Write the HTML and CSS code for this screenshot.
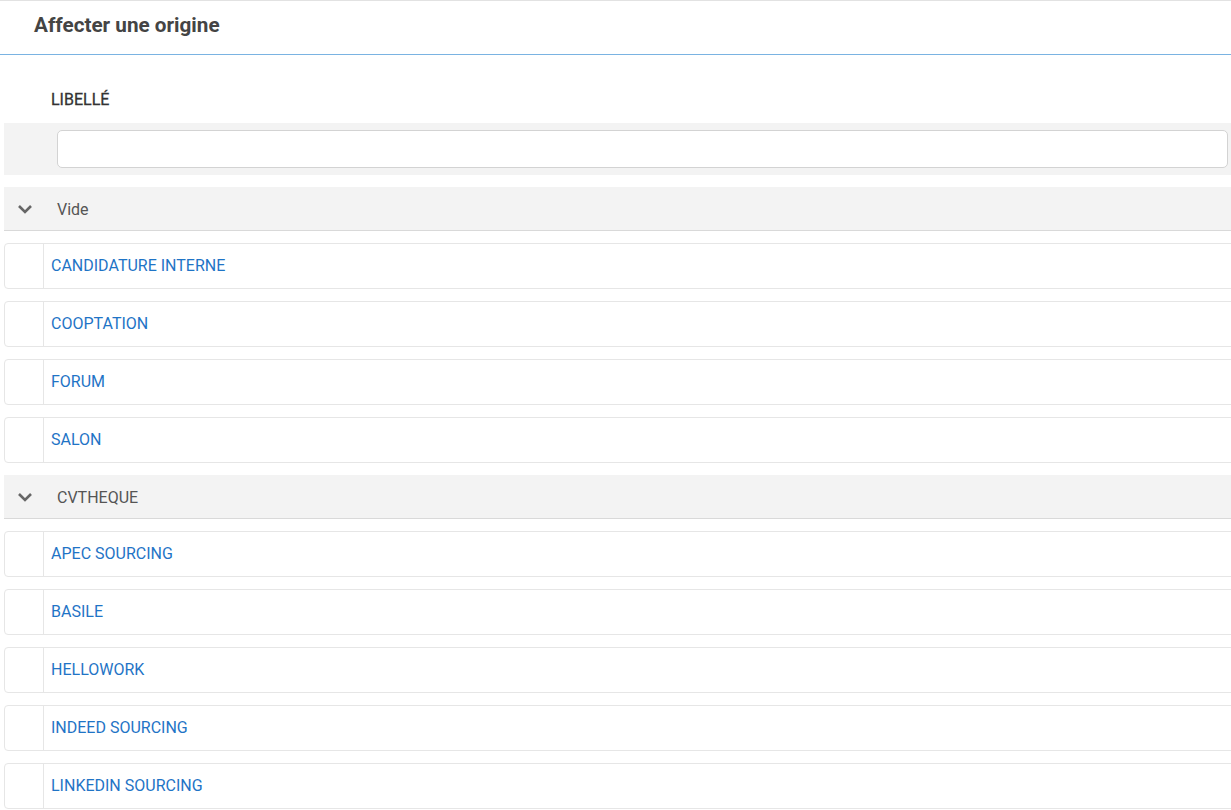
FILE: index.html
```html
<!DOCTYPE html>
<html lang="fr">
<head>
  <meta charset="UTF-8">
  <meta name="viewport" content="width=device-width, initial-scale=1.0">
  <title>Affecter une origine</title>
  <link rel="stylesheet" href="styles.css">
</head>
<body>
  <div class="modal">
    <!-- en-tête -->
    <div class="header">
      <h1>Affecter une origine</h1>
    </div>
    <div class="content">
      <div class="col-title">LIBELLÉ</div>
      <!-- filtre -->
      <div class="filter">
        <input type="text">
      </div>
      <!-- groupe Vide -->
      <div class="group">
        <svg class="chevron" width="16" height="10" viewBox="0 0 16 10"><path d="M2 2 L8 8 L14 2" fill="none" stroke="#666" stroke-width="2.6"/></svg>
        <span>Vide</span>
      </div>
      <ul class="rows">
        <li><span class="check"></span><a>CANDIDATURE INTERNE</a></li>
        <li><span class="check"></span><a>COOPTATION</a></li>
        <li><span class="check"></span><a>FORUM</a></li>
        <li><span class="check"></span><a>SALON</a></li>
      </ul>
      <!-- groupe CVTHEQUE -->
      <div class="group">
        <svg class="chevron" width="16" height="10" viewBox="0 0 16 10"><path d="M2 2 L8 8 L14 2" fill="none" stroke="#666" stroke-width="2.6"/></svg>
        <span>CVTHEQUE</span>
      </div>
      <ul class="rows">
        <li><span class="check"></span><a>APEC SOURCING</a></li>
        <li><span class="check"></span><a>BASILE</a></li>
        <li><span class="check"></span><a>HELLOWORK</a></li>
        <li><span class="check"></span><a>INDEED SOURCING</a></li>
        <li><span class="check"></span><a>LINKEDIN SOURCING</a></li>
      </ul>
    </div>
  </div>
</body>
</html>
```

FILE: styles.css
```css
/* reset */
* {
  margin: 0;
  padding: 0;
  box-sizing: border-box;
}
html, body {
  overflow: hidden;
}
body {
  font-family: Roboto, "Liberation Sans", sans-serif;
  color: #444;
  background: #fff;
  width: 1231px;
  height: 810px;
}
li {
  list-style-type: none;
}
/* en-tête */
.modal {
  border-top: 1px solid #e2e2e2;
}
.header {
  height: 54px;
  border-bottom: 1px solid #7ab3e2;
  padding: 12px 0 0 34px;
}
.header h1 {
  font-size: 20.7px;
  font-weight: 700;
  color: #444;
  line-height: 24px;
}
/* contenu */
.content {
  padding-left: 4px;
  width: 1240px;
}
.col-title {
  padding: 36px 0 0 47px;
  height: 68px;
  font-size: 16px;
  font-weight: 400;
  color: #333;
  line-height: 18px;
  -webkit-text-stroke: 0.3px #333;
}
.filter {
  background: #f3f3f3;
  height: 52px;
  padding: 7px 3px 7px 53px;
  width: 1227px;
}
.filter input {
  display: block;
  width: 100%;
  height: 38px;
  border: 1px solid #d3d3d3;
  border-radius: 5px;
  background: #fff;
  outline: none;
}
/* groupes */
.group {
  display: flex;
  align-items: center;
  height: 44px;
  margin-top: 12px;
  padding-top: 1px;
  background: #f3f3f3;
  border-bottom: 1px solid #d9d9d9;
  font-size: 16px;
  color: #555;
}
.group .chevron {
  margin: 0 24px 0 13px;
}
.rows {
  margin-top: 1px;
}
.rows li {
  display: flex;
  height: 46px;
  margin-top: 12px;
  border: 1px solid #e6e6e6;
  border-radius: 4px;
  background: #fff;
}
.rows li .check {
  width: 39px;
  border-right: 1px solid #e6e6e6;
}
.rows li a {
  padding-left: 7px;
  line-height: 43px;
  font-size: 16px;
  color: #1f74c6;
}
```
